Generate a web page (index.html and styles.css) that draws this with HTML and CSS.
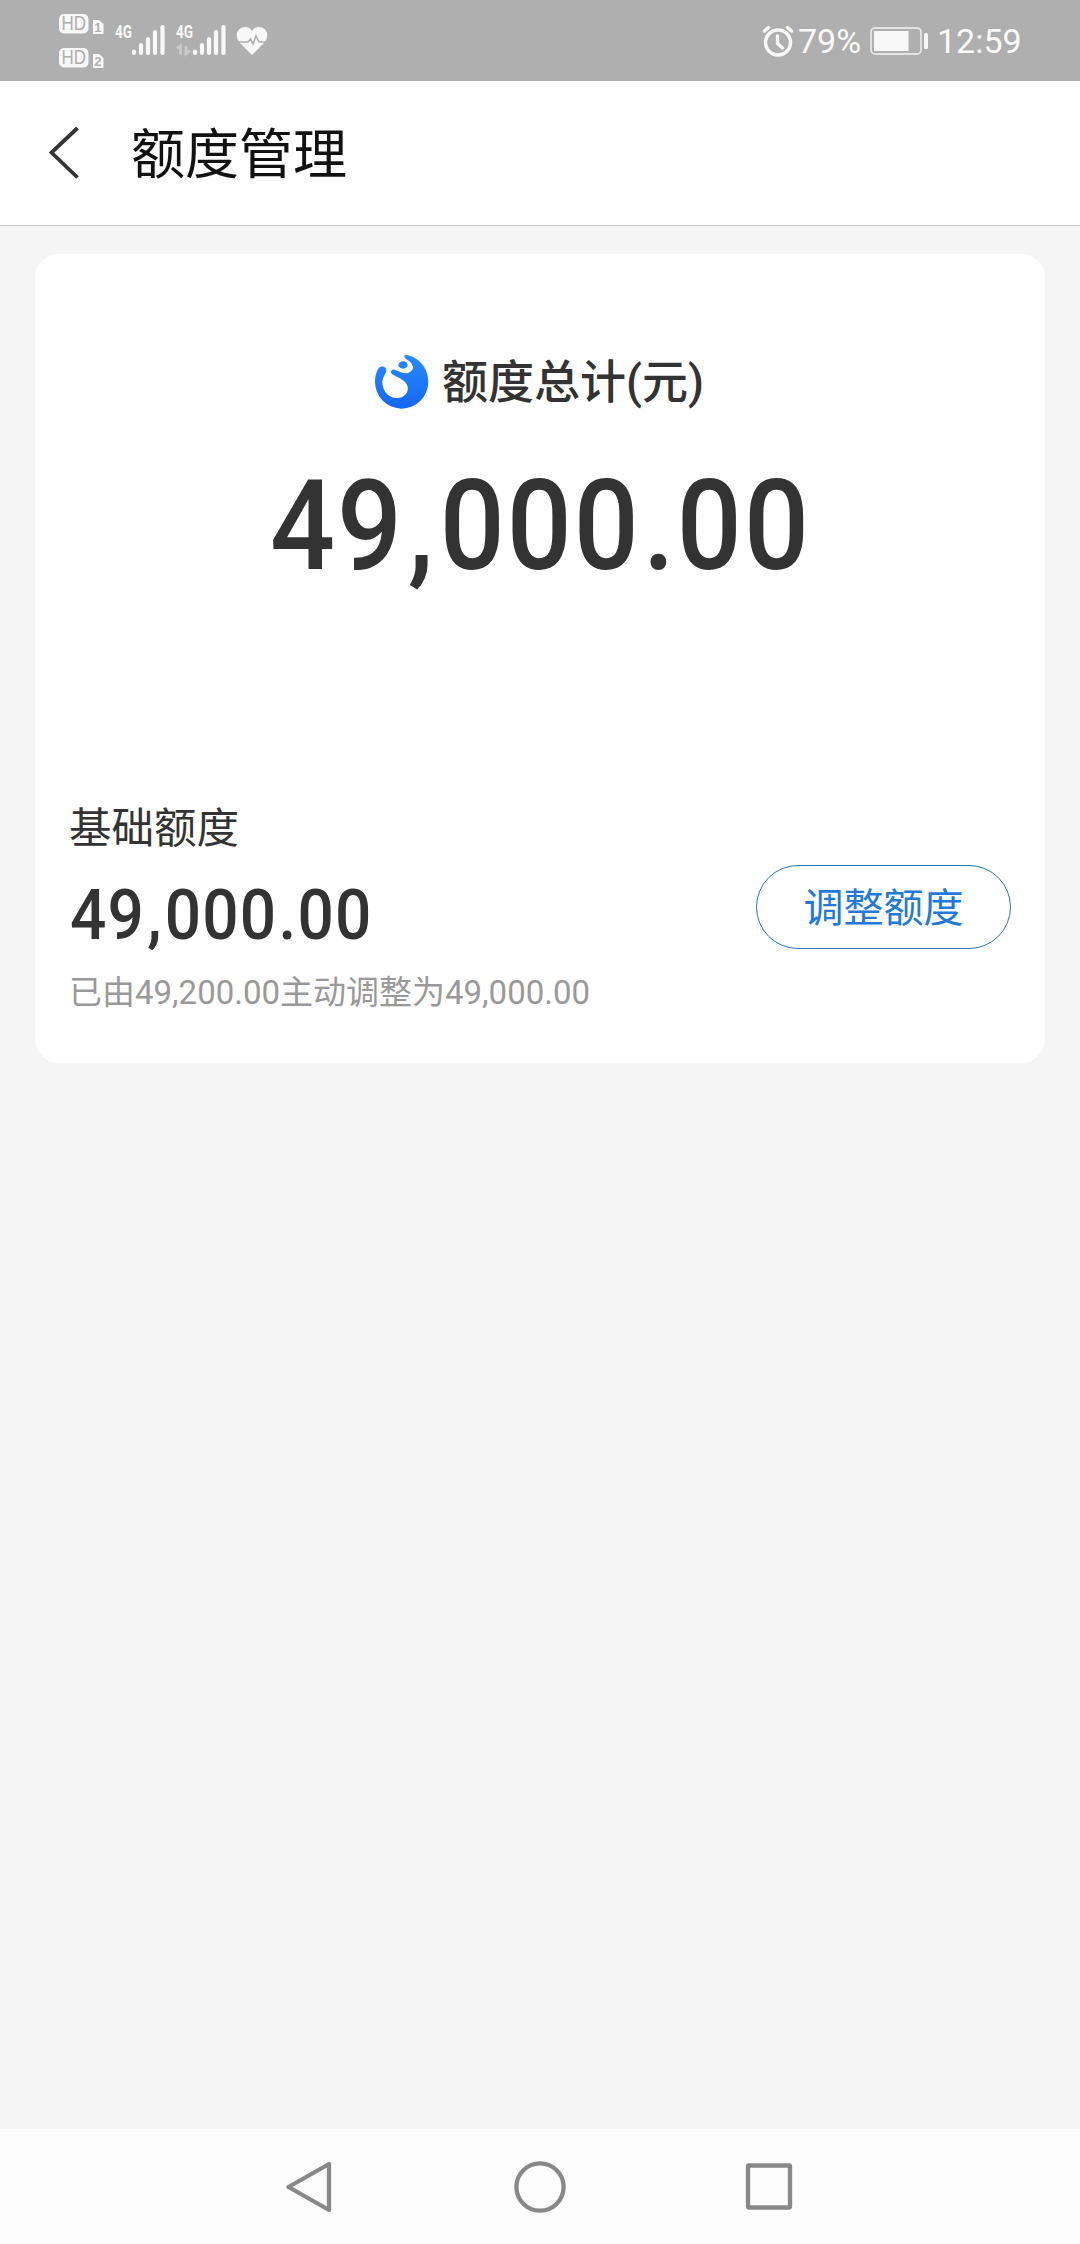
FILE: index.html
```html
<!DOCTYPE html>
<html lang="zh-CN">
<head>
<meta charset="utf-8">
<title>额度管理</title>
<link rel="stylesheet" href="styles.css">
</head>
<body>
<div class="screen">
  <div class="status">
    <svg class="status-left" width="215" height="81" viewBox="0 0 215 81">
      <g fill="#f8f8f8">
        <rect x="0" y="14" width="29.500" height="19.500" rx="5"/>
        <rect x="0" y="48" width="29.500" height="19.500" rx="5"/>
        <path d="M34 20h6l4.500 4v10h-10.500z"/>
        <path d="M34 54h6l4.500 4v10h-10.500z"/>
      </g>
      <g class="hd">
        <text x="2.500" y="30.300" textLength="24.500" lengthAdjust="spacingAndGlyphs">HD</text>
        <text x="2.500" y="64.300" textLength="24.500" lengthAdjust="spacingAndGlyphs">HD</text>
        <text class="sim" x="35.300" y="32">1</text>
        <text class="sim" x="35.300" y="66">2</text>
      </g>
      <g class="net">
        <text x="56" y="38" textLength="17" lengthAdjust="spacingAndGlyphs">4G</text>
        <text x="117" y="38" textLength="17" lengthAdjust="spacingAndGlyphs">4G</text>
      </g>
      <g stroke="#f8f8f8" stroke-width="4.200" stroke-linecap="round">
        <path d="M75 51.500v1.500M82 45v8M89 39v14M96 32v21M103.500 27v26"/>
        <path d="M136 51.500v1.500M143 45v8M150 39v14M157 32v21M164.500 27v26"/>
      </g>
      <path d="M118 48.500l3.500-2.500v8.500M127 46v8l4-3.500" fill="none" stroke="#c9c9c9" stroke-width="2.800"/>
      <path d="M193 55L180.500 42.500C174 34 180 27 186 27c3.500 0 5.500 1.500 7 4 1.500-2.500 3.500-4 7-4 6 0 12 7 5.500 15.500z" fill="#f8f8f8"/>
      <path d="M178 42h11l2.500-3 2.500 5 3-8 3 6h9" fill="none" stroke="#afafaf" stroke-width="1.600"/>
    </svg>
    <div class="status-right">
      <svg width="32" height="32" viewBox="0 0 32 32" fill="none" stroke="#f8f8f8" stroke-linecap="round">
        <circle cx="16" cy="17.500" r="12.500" stroke-width="3.500"/>
        <path d="M2.500 6L6.500 2.500M29.500 6L25.500 2.500" stroke-width="3.500"/>
        <path d="M15.500 11v7.500l5 4.500" stroke-width="3.300"/>
      </svg>
      <span class="percent">79%</span>
      <svg class="battery" width="59" height="28" viewBox="0 0 59 28">
        <rect x="1" y="1" width="50" height="26" rx="4" fill="none" stroke="#e4e4e4" stroke-width="1.800"/>
        <rect x="4" y="4" width="34.500" height="20" fill="#f8f8f8"/>
        <rect x="54" y="6" width="4" height="16" rx="1.500" fill="#f8f8f8"/>
      </svg>
      <span class="clock">12:59</span>
    </div>
  </div>
  <header class="header">
    <svg width="34" height="56" viewBox="0 0 34 56"><path d="M30.500 3L4.500 27.500L30.500 52.500" fill="none" stroke="#333" stroke-width="3.800"/></svg>
    <h1>额度管理</h1>
  </header>
  <main class="main">
    <section class="card">
      <div class="total-label">
        <svg width="54" height="55" viewBox="0 0 162 165">
          <defs><linearGradient id="blue" x1="0" y1="0" x2="0" y2="1"><stop offset="0" stop-color="#2a8bfa"/><stop offset="1" stop-color="#1566f6"/></linearGradient></defs>
          <path fill="url(#blue)" d="M92 2C132 8 160 42 160 83a80 81 0 0 1-160 0C0 67 4 53 11 43 18 34 35 36 34 50 32 60 23 68 22 84 22 112 42 133 66 132 90 131 101 114 98 98 94 80 74 72 54 62 44 57 47 45 59 47 73 51 83 60 98 57 112 53 117 42 112 33 108 22 96 18 90 12 87 7 88 2 92 2Z"/>
          <ellipse cx="84" cy="33" rx="14" ry="11" fill="#2584fa"/>
        </svg>
        <span>额度总计(元)</span>
      </div>
      <div class="total"><span class="amount">49<i class="comma">,</i>000<i class="dot">.</i>00</span></div>
      <div class="base">
        <div class="base-info">
          <div class="base-label">基础额度</div>
          <div class="base-amount"><span class="amount">49<i class="comma">,</i>000<i class="dot">.</i>00</span></div>
          <div class="base-note">已由49,200.00主动调整为49,000.00</div>
        </div>
        <button class="adjust">调整额度</button>
      </div>
    </section>
  </main>
  <nav class="nav">
    <svg width="508" height="56" viewBox="0 0 508 56" fill="none" stroke="#888" stroke-width="4.300" stroke-linejoin="round">
      <path d="M43 5v46L2.500 28z"/>
      <circle cx="254" cy="28" r="23.600"/>
      <rect x="462" y="6.500" width="42" height="42" rx="1"/>
    </svg>
  </nav>
</div>
</body>
</html>
```
FILE: styles.css
```css
* { box-sizing: border-box; margin: 0; padding: 0; }
body { font-family: Roboto, "Noto Sans CJK SC", sans-serif; color: #333; }
.screen { width: 1080px; height: 2244px; display: flex; flex-direction: column; background: #f5f5f5; }
svg { display: block; flex: none; }
.status { height: 81px; background: #afafaf; display: flex; justify-content: space-between; padding: 0 59px; color: #fafafa; }
.hd text { font: 500 20px "Liberation Sans", sans-serif; fill: #afafaf; }
.hd .sim { font: 700 13px "Liberation Sans", sans-serif; }
.net text { font: 700 18px Roboto, sans-serif; fill: #f8f8f8; }
.status-right { display: flex; align-items: center; font-size: 34px; line-height: 40px; }
.percent { width: 70px; padding-left: 4px; }
.battery { margin-left: 6px; }
.clock { width: 84px; margin-left: 8px; }
.header { height: 145px; background: #fff; border-bottom: 1px solid #c4c4c4; display: flex; align-items: center; padding-left: 47px; gap: 50px; }
h1 { font-size: 54px; font-weight: 400; line-height: 80px; padding-top: 5px; color: #111; }
.main { flex: 1; padding: 28px 35px; }
.card { height: 809px; background: #fff; border-radius: 24px; padding: 94px 34px 0 35px; display: flex; flex-direction: column; }
.total-label { display: flex; align-items: center; justify-content: center; gap: 13px; height: 66px; padding-right: 2px; font-size: 46px; font-weight: 500; }
.total-label span { padding-bottom: 6px; }
.total { height: 150px; margin-top: 37px; line-height: 150px; font-size: 127px; font-weight: 500; display: flex; justify-content: center; }
.amount { display: block; white-space: nowrap; transform: scaleX(.9); letter-spacing: .018em; }
.amount i { font-style: normal; }
.comma { margin-left: .035em; margin-right: .035em; }
.dot { margin-left: .02em; }
.base { display: flex; justify-content: space-between; align-items: flex-start; margin-top: 196px; }
.base-label { font-size: 42.500px; line-height: 60px; margin: 2px 0 0 -1px; }
.base-amount { font-size: 71px; line-height: 84px; font-weight: 500; margin-top: 14px; }
.base-amount .amount { transform-origin: left; }
.base-note { font-size: 33px; line-height: 48px; color: #999; margin: 12px 0 0 -1px; }
.adjust { width: 255px; height: 84px; margin-top: 68px; padding-bottom: 5px; border: 1px solid #2b75b5; border-radius: 42px; background: none; color: #2479d8; font: 400 40px "Noto Sans CJK SC", sans-serif; }
.nav { height: 115px; background: #fcfcfc; display: flex; justify-content: center; align-items: center; }
```
